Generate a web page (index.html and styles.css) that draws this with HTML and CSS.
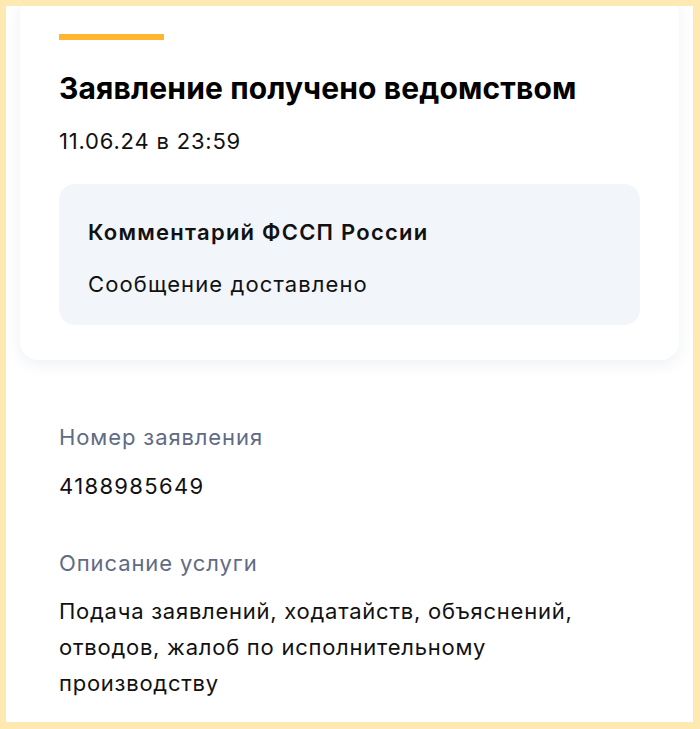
FILE: index.html
```html
<!DOCTYPE html>
<html lang="ru">
<head>
    <meta charset="UTF-8">
    <meta name="viewport" content="width=device-width, initial-scale=1.0">
    <title>Заявление</title>
    <link rel="stylesheet" href="styles.css">
</head>
<body>
    <div class="frame">
        <div class="screen">
            <div class="status-card">
                <div class="status-bar"></div>
                <h1 class="status-title">Заявление получено ведомством</h1>
                <div class="status-date">11.06.24 в 23:59</div>
                <div class="comment">
                    <div class="comment-title">Комментарий ФССП России</div>
                    <div class="comment-text">Сообщение доставлено</div>
                </div>
            </div>

            <div class="details">
                <div class="detail">
                    <div class="detail-label">Номер заявления</div>
                    <div class="detail-value detail-number">4188985649</div>
                </div>
                <div class="detail">
                    <div class="detail-label">Описание услуги</div>
                    <div class="detail-value detail-text">Подача заявлений, ходатайств, объяснений, отводов, жалоб по исполнительному производству</div>
                </div>
            </div>
        </div>
    </div>
</body>
</html>
```

FILE: styles.css
```css
body {
    margin: 0;
    font-family: Inter, "Noto Sans", sans-serif;
    color: #111;
    background: #ffe9b3;
}
.frame {
    width: 700px;
    height: 729px;
    box-sizing: border-box;
    border: 6px solid #ffe9b3;
    border-right-width: 7px;
    border-bottom-width: 7px;
}
.screen {
    height: 100%;
    background: #ffffff;
    overflow: hidden;
}
.status-card {
    margin: -10px 14px 0;
    padding: 38px 39px 35px;
    background: #fff;
    border-radius: 18px;
    box-shadow: 0 4px 16px rgba(40, 60, 120, 0.08);
}
.status-bar {
    width: 105px;
    height: 6px;
    background: #ffb52e;
    margin-bottom: 30px;
}
.status-title {
    margin: 0;
    font-size: 30px;
    line-height: 36px;
    font-weight: 650;
    letter-spacing: 0.15px;
    color: #000;
}
.status-date {
    margin-top: 20px;
    font-size: 22px;
    line-height: 30px;
    letter-spacing: 0.8px;
}
.comment {
    margin-top: 28px;
    padding: 34px 29px 27px;
    background: #f2f5fa;
    border-radius: 16px;
}
.comment-title {
    font-size: 22px;
    line-height: 28px;
    font-weight: 600;
    letter-spacing: 1.25px;
}
.comment-text {
    margin-top: 24px;
    font-size: 22px;
    line-height: 28px;
    letter-spacing: 1.1px;
}
.details {
    padding: 63px 70px 0 53px;
}
.detail + .detail {
    margin-top: 49px;
}
.detail-label {
    font-size: 22px;
    line-height: 28px;
    letter-spacing: 0.9px;
    color: #5f6b85;
}
.detail-value {
    margin-top: 21px;
    font-size: 22px;
    line-height: 28px;
    letter-spacing: 0.9px;
}
.detail-number {
    letter-spacing: 1.35px;
}
.detail-text {
    margin-top: 16px;
    line-height: 36px;
    letter-spacing: 0.75px;
}
```
